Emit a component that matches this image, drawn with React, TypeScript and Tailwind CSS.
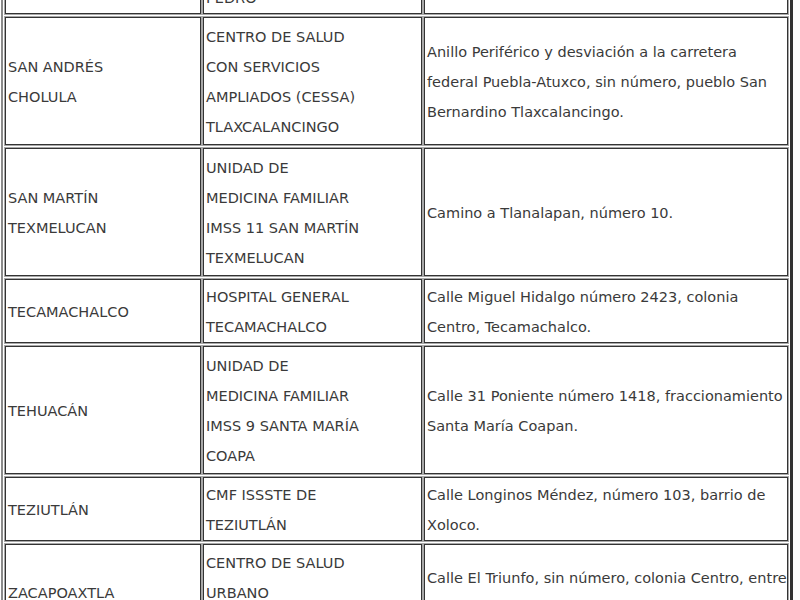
type Row = {
  municipio: string[];
  unidad: string[];
  domicilio: string[];
  lines: number;
};

const rows: Row[] = [
  {
    municipio: ['SAN PEDRO CHOLULA'],
    unidad: ['HOSPITAL GENERAL SAN', 'PEDRO'],
    domicilio: ['Calle 4 Poniente, San Pedro Cholula.'],
    lines: 2,
  },
  {
    municipio: ['SAN ANDRÉS', 'CHOLULA'],
    unidad: ['CENTRO DE SALUD', 'CON SERVICIOS', 'AMPLIADOS (CESSA)', 'TLAXCALANCINGO'],
    domicilio: [
      'Anillo Periférico y desviación a la carretera',
      'federal Puebla-Atuxco, sin número, pueblo San',
      'Bernardino Tlaxcalancingo.',
    ],
    lines: 4,
  },
  {
    municipio: ['SAN MARTÍN', 'TEXMELUCAN'],
    unidad: ['UNIDAD DE', 'MEDICINA FAMILIAR', 'IMSS 11 SAN MARTÍN', 'TEXMELUCAN'],
    domicilio: ['Camino a Tlanalapan, número 10.'],
    lines: 4,
  },
  {
    municipio: ['TECAMACHALCO'],
    unidad: ['HOSPITAL GENERAL', 'TECAMACHALCO'],
    domicilio: ['Calle Miguel Hidalgo número 2423, colonia', 'Centro, Tecamachalco.'],
    lines: 2,
  },
  {
    municipio: ['TEHUACÁN'],
    unidad: ['UNIDAD DE', 'MEDICINA FAMILIAR', 'IMSS 9 SANTA MARÍA', 'COAPA'],
    domicilio: ['Calle 31 Poniente número 1418, fraccionamiento', 'Santa María Coapan.'],
    lines: 4,
  },
  {
    municipio: ['TEZIUTLÁN'],
    unidad: ['CMF ISSSTE DE', 'TEZIUTLÁN'],
    domicilio: ['Calle Longinos Méndez, número 103, barrio de', 'Xoloco.'],
    lines: 2,
  },
  {
    municipio: ['ZACAPOAXTLA'],
    unidad: ['CENTRO DE SALUD', 'URBANO', 'ZACAPOAXTLA'],
    domicilio: ['Calle El Triunfo, sin número, colonia Centro, entre', 'calles Hidalgo y Morelos.'],
    lines: 3,
  },
];

const rowHeight: Record<number, string> = {
  2: 'h-[64px]',
  3: 'h-[96px]',
  4: 'h-[128px]',
};

function Cell({ lines, width }: { lines: string[]; width: string }) {
  return (
    <td
      className={`${width} border border-[#333333] pl-[2px] pr-0 pt-[2px] pb-0 align-middle shadow-[0_0_0_1px_#a8a8a8]`}
    >
      {lines.map((line, i) => (
        <div key={i} className="whitespace-nowrap leading-[30px]">
          {line}
        </div>
      ))}
    </td>
  );
}

export default function App() {
  return (
    <div
      className="h-[600px] w-[800px] overflow-hidden bg-white pl-[1px] text-[14.5px] text-[#3a3a3a]"
      style={{ fontFamily: '"DejaVu Sans", Verdana, sans-serif' }}
    >
      <table className="-mt-[55px] table-fixed border-separate border-spacing-x-[2px] border-spacing-y-[3px] border-t-2 border-b-2 border-l-2 border-r-[3px] border-t-[#8a8a8a] border-l-[#8a8a8a] border-r-[#333333] border-b-[#333333]">
        <tbody>
          {rows.map((row, i) => (
            <tr key={i} className={rowHeight[row.lines]}>
              <Cell lines={row.municipio} width="w-[196px]" />
              <Cell lines={row.unidad} width="w-[219px]" />
              <Cell lines={row.domicilio} width="w-[364px]" />
            </tr>
          ))}
        </tbody>
      </table>
    </div>
  );
}
